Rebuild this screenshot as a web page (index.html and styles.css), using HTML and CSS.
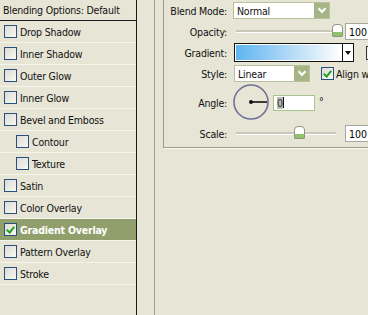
FILE: index.html
```html
<!DOCTYPE html>
<html lang="en">
<head>
  <meta charset="UTF-8">
  <title>Layer Style - Gradient Overlay</title>
  <link rel="stylesheet" href="styles.css">
</head>
<body>

  <div class="dialog">

    <!-- Style list -->
    <div class="styles-list">
      <div class="list-head">Blending Options: Default</div>
      <div class="style-row"><span class="check"></span>Drop Shadow</div>
      <div class="style-row"><span class="check"></span>Inner Shadow</div>
      <div class="style-row"><span class="check"></span>Outer Glow</div>
      <div class="style-row"><span class="check"></span>Inner Glow</div>
      <div class="style-row"><span class="check"></span>Bevel and Emboss</div>
      <div class="style-row sub"><span class="check"></span>Contour</div>
      <div class="style-row sub"><span class="check"></span>Texture</div>
      <div class="style-row"><span class="check"></span>Satin</div>
      <div class="style-row"><span class="check"></span>Color Overlay</div>
      <div class="style-row active"><span class="check on"></span>Gradient Overlay</div>
      <div class="style-row"><span class="check"></span>Pattern Overlay</div>
      <div class="style-row"><span class="check"></span>Stroke</div>
    </div>

    <div class="divider"></div>

    <!-- Settings -->
    <div class="settings">
      <div class="group">
        <label class="lbl">Blend Mode:</label>
        <div class="ctl">
          <div class="select wide"><span>Normal</span><span class="drop"></span></div>
        </div>

        <label class="lbl">Opacity:</label>
        <div class="ctl">
          <div class="slider"><span class="thumb" style="left: 96px;"></span></div>
          <input class="num" type="text" value="100">
        </div>

        <label class="lbl">Gradient:</label>
        <div class="ctl">
          <div class="gradient"><span class="ramp"></span><span class="arrow"></span></div>
          <span class="check reverse"></span>
        </div>

        <label class="lbl">Style:</label>
        <div class="ctl">
          <div class="select short"><span>Linear</span><span class="drop"></span></div>
          <span class="check on align"></span><span class="align-text">Align with Layer</span>
        </div>

        <label class="lbl">Angle:</label>
        <div class="ctl">
          <svg class="dial" width="38" height="38" viewBox="0 0 38 38">
            <circle cx="19" cy="19" r="17" fill="none" stroke="#6e7197" stroke-width="1.6"/>
            <line x1="19" y1="19" x2="35" y2="19" stroke="#111" stroke-width="1.6"/>
            <circle cx="19" cy="19" r="2" fill="#111"/>
          </svg>
          <div class="angle-box"><span class="sel">0</span><span class="caret"></span></div>
          <span class="deg">°</span>
        </div>

        <label class="lbl">Scale:</label>
        <div class="ctl">
          <div class="slider"><span class="thumb" style="left: 58px;"></span></div>
          <input class="num" type="text" value="100">
        </div>
      </div>
    </div>

  </div>

</body>
</html>
```

FILE: styles.css
```css
body {
  margin: 0;
  width: 368px;
  height: 315px;
  overflow: hidden;
  background-color: #e6e5d6;
  font-family: 'DejaVu Sans Condensed', 'DejaVu Sans', sans-serif;
  font-size: 10.5px;
  letter-spacing: -0.2px;
  color: #111;
}

.dialog {
  display: flex;
  height: 315px;
}

/* left list */
.styles-list {
  width: 136px;
  border-right: 1px solid #1a1a1a;
  flex: none;
}

.list-head {
  height: 21px;
  line-height: 20px;
  padding-left: 3px;
  border-bottom: 1px solid #1a1a1a;
  box-sizing: border-box;
}

.style-row {
  display: flex;
  align-items: center;
  gap: 3px;
  height: 22px;
  padding-left: 4px;
  box-sizing: border-box;
  border-bottom: 1px solid #f6f5ec;
}

.style-row.sub {
  padding-left: 16px;
}

.style-row.active {
  background-color: #919f6c;
  color: #fff;
  font-weight: bold;
}

.check {
  display: inline-block;
  width: 11px;
  height: 11px;
  border: 1px solid #2a4f7e;
  background: linear-gradient(135deg, #dcdcd2, #f8f8f4);
  flex: none;
  position: relative;
}

.check.on::after {
  content: '';
  position: absolute;
  left: 3px;
  top: 1px;
  width: 3px;
  height: 6px;
  border: solid #22a022;
  border-width: 0 2px 2px 0;
  transform: rotate(40deg);
}

.divider {
  width: 17px;
  border-right: 1px solid #a3a295;
  flex: none;
}

/* right settings */
.settings {
  flex: 1;
  padding-left: 8px;
  overflow: hidden;
}

.group {
  display: grid;
  grid-template-columns: 63px 1fr;
  grid-template-rows: 21px 21px 21px 21px 37px 25px;
  column-gap: 7px;
  align-items: center;
  border-left: 1px solid #9c9b8e;
  border-bottom: 1px solid #9c9b8e;
  box-shadow: 1px 1px 0 #fbfaf3;
  height: 148px;
  box-sizing: border-box;
  width: 260px;
}

.lbl {
  text-align: right;
  white-space: nowrap;
}

.ctl {
  display: flex;
  align-items: center;
  white-space: nowrap;
}

.select {
  display: flex;
  align-items: center;
  justify-content: space-between;
  height: 17px;
  box-sizing: border-box;
  border: 1px solid #b7c19c;
  background: #fff;
  padding-left: 3px;
}

.select.wide {
  width: 97px;
  margin-left: -1px;
}

.select.short {
  width: 76px;
}

.drop {
  width: 15px;
  height: 15px;
  background: #a6b585;
  position: relative;
}

.drop::after {
  content: '';
  position: absolute;
  left: 5px;
  top: 3px;
  width: 4px;
  height: 4px;
  border: solid #fff;
  border-width: 0 2px 2px 0;
  transform: rotate(45deg);
}

.slider {
  position: relative;
  width: 100px;
  height: 2px;
  margin-left: 2px;
  background: #c8c7b9;
  border-bottom: 1px solid #fff;
}

.thumb {
  position: absolute;
  top: -6px;
  width: 9px;
  height: 11px;
  border: 1px solid #8f9784;
  border-radius: 4px 4px 1px 1px;
  background: linear-gradient(#fff 60%, #8fc26a 61%);
}

.num {
  margin-left: 9px;
  width: 40px;
  height: 17px;
  box-sizing: border-box;
  border: 1px solid #a5a99a;
  font: inherit;
  padding: 0 3px;
  background: #fff;
}

.gradient {
  display: flex;
  width: 120px;
  height: 19px;
  box-sizing: border-box;
  border: 1px solid #111;
  background: #fff;
}

.ramp {
  flex: 1;
  margin: 1px;
  background: linear-gradient(to right, #5fb5ef, #b8dcf7 55%, #fff);
}

.arrow {
  width: 10px;
  border-left: 1px solid #111;
  position: relative;
}

.arrow::after {
  content: '';
  position: absolute;
  left: 2px;
  top: 7px;
  border: 3px solid transparent;
  border-top: 4px solid #111;
}

.check.reverse {
  margin-left: 12px;
  width: 12px;
  height: 12px;
  border-color: #333;
  background: #f4f4ee;
}

.check.align {
  margin-left: 11px;
  width: 11px;
  height: 11px;
}

.align-text {
  margin-left: 2px;
}

.dial {
  margin-left: -2px;
  margin-top: -2px;
}

.angle-box {
  display: flex;
  align-items: center;
  margin-left: 3px;
  width: 42px;
  height: 16px;
  box-sizing: border-box;
  border: 1px solid #a9c38f;
  background: #fff;
  padding-left: 3px;
}

.sel {
  background: #b9bcb0;
  color: #333;
  line-height: 12px;
}

.caret {
  width: 1px;
  height: 11px;
  background: #111;
}

.deg {
  margin-left: 4px;
  margin-top: -4px;
}
```
